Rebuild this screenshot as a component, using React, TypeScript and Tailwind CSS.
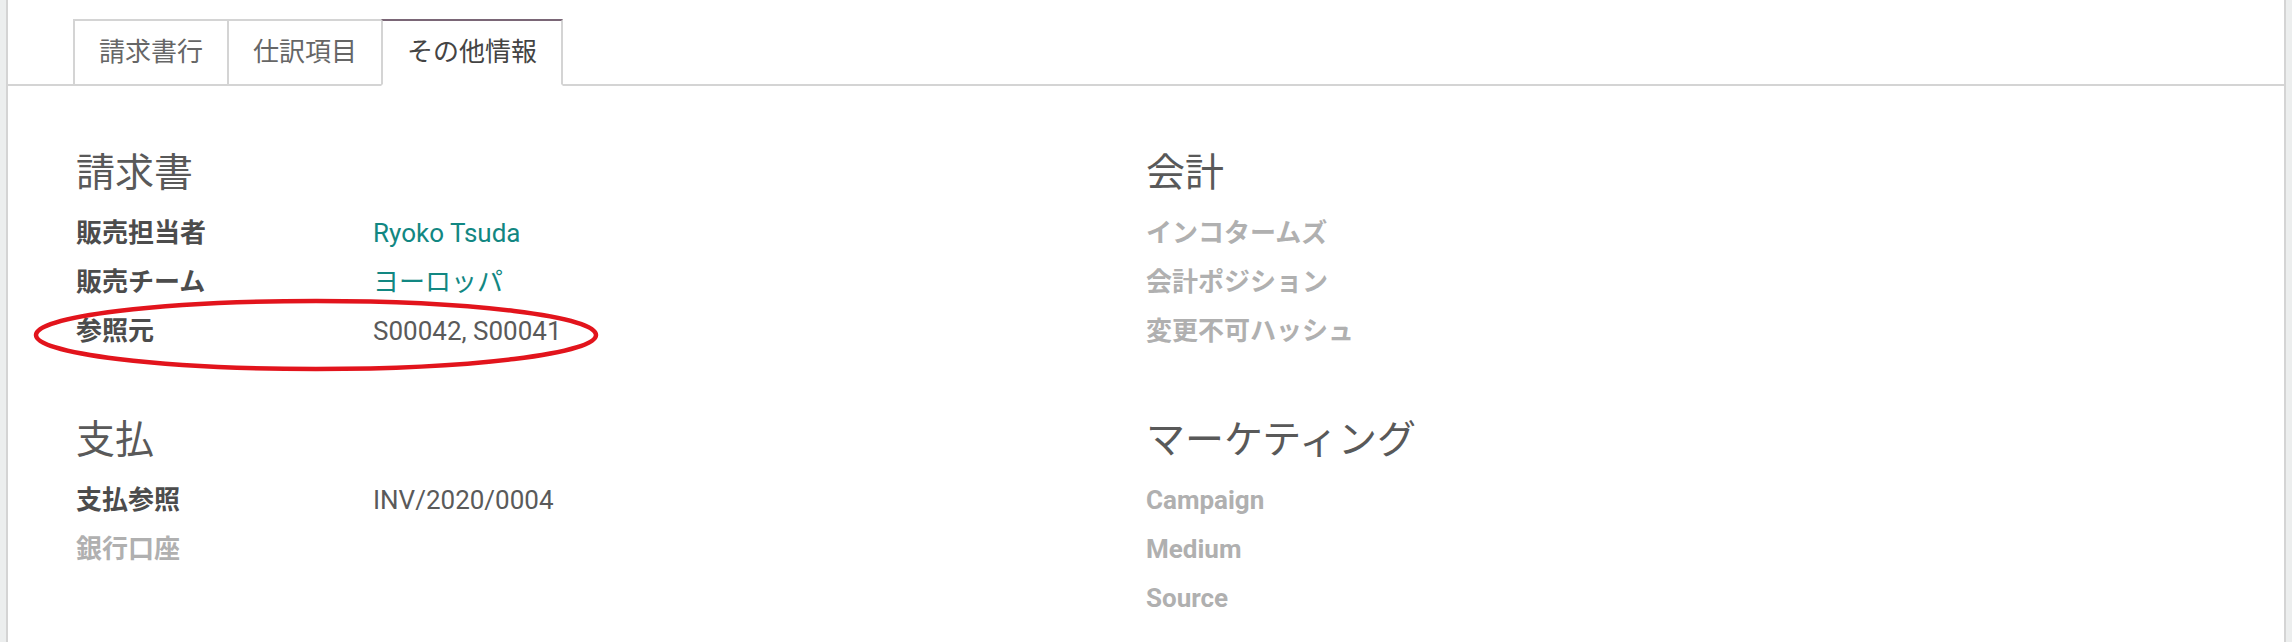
import React from "react"

const font = { fontFamily: '"Roboto", "Noto Sans CJK JP", sans-serif' }

interface Field {
  label: string
  value?: string
  link?: boolean
}

interface Group {
  title: string
  fields: Field[]
}

const leftGroups: Group[] = [
  {
    title: "請求書",
    fields: [
      { label: "販売担当者", value: "Ryoko Tsuda", link: true },
      { label: "販売チーム", value: "ヨーロッパ", link: true },
      { label: "参照元", value: "S00042, S00041" },
    ],
  },
  {
    title: "支払",
    fields: [{ label: "支払参照", value: "INV/2020/0004" }, { label: "銀行口座" }],
  },
]

const rightGroups: Group[] = [
  {
    title: "会計",
    fields: [{ label: "インコタームズ" }, { label: "会計ポジション" }, { label: "変更不可ハッシュ" }],
  },
  {
    title: "マーケティング",
    fields: [{ label: "Campaign" }, { label: "Medium" }, { label: "Source" }],
  },
]

const tabs = ["請求書行", "仕訳項目", "その他情報"]

function FieldGroup({ group, first }: { group: Group; first?: boolean }) {
  return (
    <div className={first ? "" : "mt-[61px]"}>
      <h2 className="text-[39px] leading-[47px] font-normal text-[#595959]">{group.title}</h2>
      <div className="mt-[12px]">
        {group.fields.map((f) => (
          <div key={f.label} className="flex h-[49px] items-center text-[26px]">
            <div
              className={
                "w-[297px] shrink-0 font-bold " + (f.value ? "text-[#4c4c4c]" : "text-[#b0b0b0]")
              }
            >
              {f.label}
            </div>
            {f.value && (
              <div className={f.link ? "text-[#128782]" : "text-[#5a5a5a]"}>{f.value}</div>
            )}
          </div>
        ))}
      </div>
    </div>
  )
}

export default function App() {
  return (
    <div className="relative flex h-[642px] w-[2292px] overflow-hidden bg-[#eceeee] px-[6px]" style={font}>
      <div className="flex-1 border-x-2 border-[#d4d4d4] bg-white">
        <div className="flex border-b-2 border-[#d4d4d4] pl-[65px] pt-[19px]">
          {tabs.map((t, i) => {
            const active = i === tabs.length - 1
            return (
              <div
                key={t}
                className={
                  "-mb-[2px] flex h-[67px] items-center border-2 border-r-0 px-[24px] text-[26px] " +
                  (active
                    ? "border-r-2 border-[#d4d4d4] border-t-[#7a6676] border-b-white bg-white text-[#444444]"
                    : "border-[#d4d4d4] text-[#666666]")
                }
              >
                {t}
              </div>
            )
          })}
        </div>

        <div className="grid grid-cols-2 px-[68px] pt-[64px]">
          <div>
            {leftGroups.map((g, i) => (
              <FieldGroup key={g.title} group={g} first={i === 0} />
            ))}
          </div>
          <div>
            {rightGroups.map((g, i) => (
              <FieldGroup key={g.title} group={g} first={i === 0} />
            ))}
          </div>
        </div>
      </div>

      {/* red annotation around 参照元 */}
      <svg className="absolute left-[30px] top-[296px]" width="572" height="80" viewBox="0 0 572 80">
        <ellipse cx="286" cy="39" rx="280" ry="34" fill="none" stroke="#e2141c" strokeWidth="4.5" />
      </svg>
    </div>
  )
}
